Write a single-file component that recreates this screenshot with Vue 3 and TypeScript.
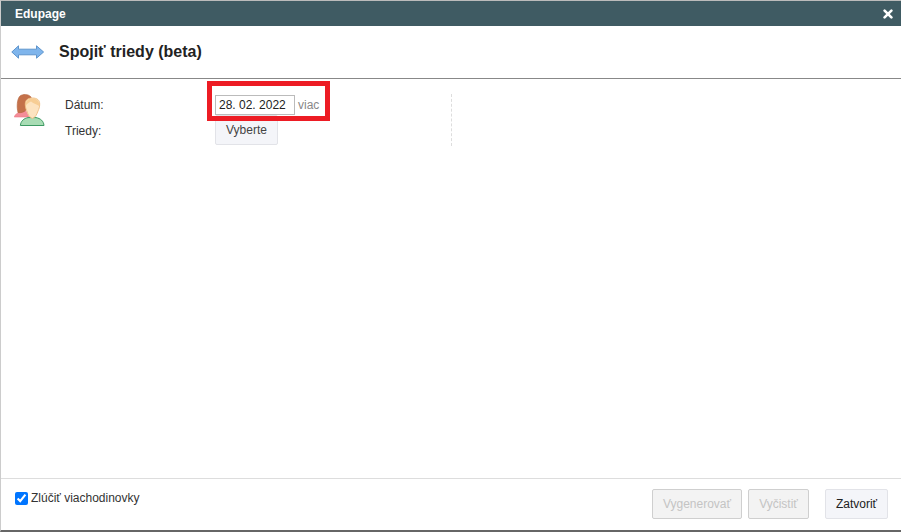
<script setup lang="ts">
import { ref } from 'vue'
const merge = ref(true)
</script>

<template>
  <div class="window">
    <header class="titlebar">
      <span class="app-name">Edupage</span>
      <svg class="close" width="10" height="10" viewBox="0 0 10 10" aria-label="close">
        <path d="M1.6 1.6 L8.4 8.4 M8.4 1.6 L1.6 8.4" stroke="#fff" stroke-width="2.6" stroke-linecap="round" />
      </svg>
    </header>

    <div class="heading">
      <svg class="arrow" width="34" height="14" viewBox="0 0 34 14">
        <path d="M0.8 7 L7.5 0.8 V4.2 H25.5 V0.8 L32.6 7 L25.5 13.2 V9.8 H7.5 V13.2 Z" fill="#7fb5ec" stroke="#5f95cc" stroke-width="1" />
      </svg>
      <h1>Spojiť triedy (beta)</h1>
    </div>

    <main class="body">
      <svg class="people" width="31" height="33" viewBox="0 0 31 33">
        <path d="M0.3 23 C1 20.5 3 19 6 18 L12 17 L15 23 Z" fill="#f48d98" stroke="#ee7a87" stroke-width="0.6" />
        <path d="M4 18.5 C2.5 13 3 5 6 2 C9 -0.2 14 0 16.5 2.5 L18 5 L12 16 C10 18.5 6.5 19 4 18.5 Z" fill="#c4714a" stroke="#b5633b" stroke-width="0.6" />
        <path d="M6.4 31.5 C6.7 27 10 24.4 14 23.6 L22 23.6 C26.5 24.4 29.6 27 30 31.5 Z" fill="#a8dcb4" stroke="#3d9a63" stroke-width="1" />
        <path d="M11.3 10 C11.3 6 14 4 18.4 4 C23 4 25.7 6 25.7 10 C25.7 13 25 15 24 17 C23 20 21.5 23.6 18.4 24.4 C15.4 23.6 13.8 20 12.9 17 C11.9 15 11.3 13 11.3 10 Z" fill="#fde3c0" stroke="#eebd82" stroke-width="0.9" />
        <path d="M11.8 12 C13 9.5 15 8.6 17 7.6 C19 9.4 22.4 10.4 25.2 12 C25.8 8 23.6 4.5 18.4 4.5 C13.8 4.5 11.2 8 11.8 12 Z" fill="#f7cd94" />
      </svg>

      <div class="form">
        <div class="row">
          <label class="field-label">Dátum:</label>
          <input class="date" type="text" value="28. 02. 2022" />
          <a class="more">viac</a>
          <div class="highlight"></div>
        </div>
        <div class="row second">
          <label class="field-label">Triedy:</label>
          <button class="btn select" type="button">Vyberte</button>
        </div>
      </div>
      <div class="divider"></div>
    </main>

    <footer class="footer">
      <label class="merge">
        <input v-model="merge" type="checkbox" />
        <span>Zlúčiť viachodinovky</span>
      </label>
      <div class="actions">
        <button class="btn disabled gen" type="button" disabled>Vygenerovať</button>
        <button class="btn disabled clr" type="button" disabled>Vyčistiť</button>
        <button class="btn close-btn" type="button">Zatvoriť</button>
      </div>
    </footer>
  </div>
</template>

<style>
html, body { margin: 0; background: #fff; overflow: hidden; }
</style>

<style scoped>
.window {
  box-sizing: border-box;
  width: 901px;
  height: 532px;
  display: flex;
  flex-direction: column;
  background: #fff;
  border-top: 1px solid #bbb;
  border-left: 1px solid #ccc;
  border-bottom: 2px solid #666;
  font-family: "Liberation Sans", Arial, sans-serif;
  font-size: 12px;
  color: #333;
}
.titlebar {
  height: 25px;
  flex: none;
  display: flex;
  align-items: center;
  justify-content: space-between;
  padding: 0 8px 0 14px;
  background: #3f5b63;
  color: #fff;
  font-weight: bold;
}
.heading {
  height: 53px;
  flex: none;
  box-sizing: border-box;
  display: flex;
  align-items: center;
  gap: 14px;
  padding-left: 10px;
  border-bottom: 1px solid #888;
}
.arrow { margin-top: -1px; }
.heading h1 {
  margin: 0 0 1px;
  font-size: 16px;
  font-weight: bold;
  color: #222;
}
.body {
  flex: 1;
  display: flex;
  align-items: flex-start;
  padding: 15px 0 0 13px;
}
.people { flex: none; }
.form {
  width: 386px;
  margin-left: 20px;
  display: flex;
  flex-direction: column;
}
.row {
  position: relative;
  display: flex;
  align-items: center;
  height: 20px;
  margin-top: 1px;
}
.row.second { height: 30px; margin-top: 0; }
.row.second .field-label { margin-top: 2px; }
.field-label { width: 150px; flex: none; }
.date {
  box-sizing: border-box;
  width: 80px;
  height: 20px;
  padding: 0 3px;
  border: 1px solid #bbb;
  font: 12px "Liberation Sans", Arial, sans-serif;
  color: #222;
  background: #fff;
}
.more { margin-left: 3px; color: #888; }
.highlight {
  position: absolute;
  left: 142px;
  top: -14px;
  width: 123px;
  height: 40px;
  box-sizing: border-box;
  border: 5px solid #ed1c24;
  pointer-events: none;
  z-index: 1;
}
.btn {
  box-sizing: border-box;
  height: 30px;
  padding: 0;
  border: 1px solid #e2e3e8;
  border-radius: 2px;
  background: #f4f5f9;
  color: #333;
  font: 12px "Liberation Sans", Arial, sans-serif;
}
.select { width: 63px; color: #444; }
.divider {
  width: 0;
  height: 52px;
  border-left: 1px dashed #ddd;
}
.footer {
  height: 52px;
  flex: none;
  box-sizing: border-box;
  border-top: 1px solid #ddd;
  display: flex;
  justify-content: space-between;
  padding: 10px 13px 0 14px;
}
.merge {
  display: flex;
  align-items: center;
  height: 20px;
  gap: 3px;
  color: #333;
  margin-top: -1px;
}
.merge input {
  width: 13px;
  height: 13px;
  margin: 0;
  accent-color: #0075ff;
}
.merge span { margin-top: -1px; }
.actions { display: flex; }
.disabled {
  background: #f3f3f3;
  border: 1px solid #cfcfcf;
  color: #c4c4c4;
}
.gen { width: 90px; }
.clr { width: 61px; margin-left: 6px; }
.close-btn { width: 63px; margin-left: 16px; color: #222; }
</style>
